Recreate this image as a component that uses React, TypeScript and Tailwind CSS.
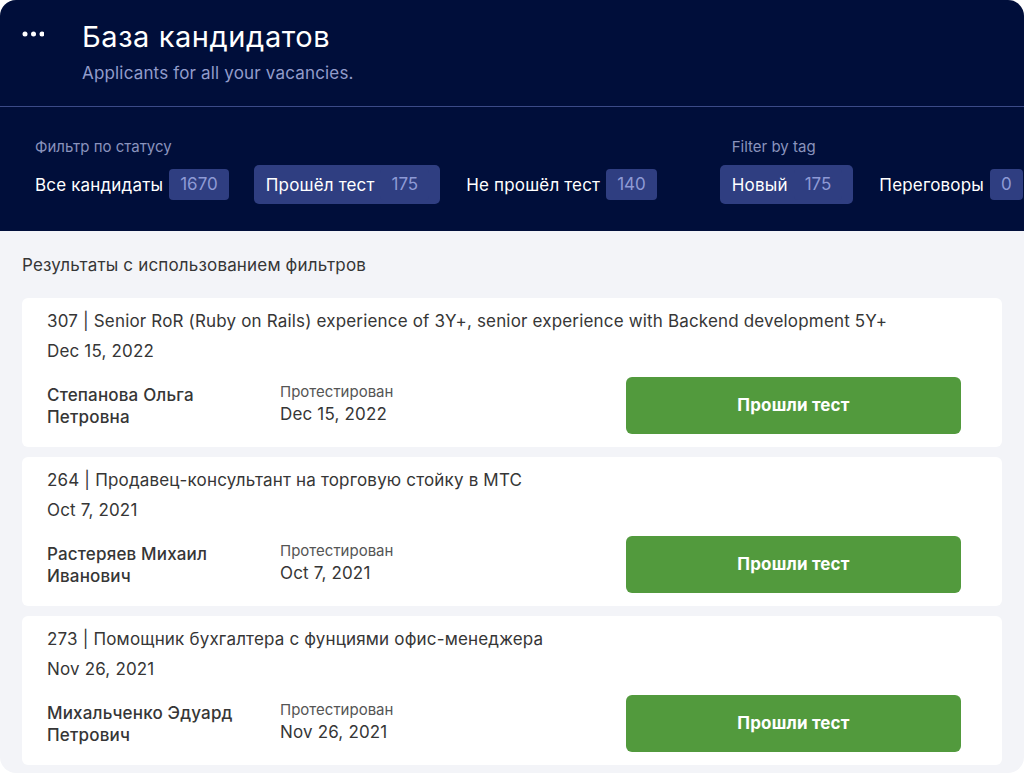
import React from 'react';

interface Chip {
    label: string;
    count: number;
    active?: boolean;
}

interface Candidate {
    id: number;
    vacancy: string;
    date: string;
    name: string;
}

const statusChips: Chip[] = [
    { label: 'Все кандидаты', count: 1670 },
    { label: 'Прошёл тест', count: 175, active: true },
    { label: 'Не прошёл тест', count: 140 },
];

const tagChips: Chip[] = [
    { label: 'Новый', count: 175, active: true },
    { label: 'Переговоры', count: 0 },
];

const candidates: Candidate[] = [
    {
        id: 307,
        vacancy: 'Senior RoR (Ruby on Rails) experience of 3Y+, senior experience with Backend development 5Y+',
        date: 'Dec 15, 2022',
        name: 'Степанова Ольга Петровна',
    },
    {
        id: 264,
        vacancy: 'Продавец-консультант на торговую стойку в МТС',
        date: 'Oct 7, 2021',
        name: 'Растеряев Михаил Иванович',
    },
    {
        id: 273,
        vacancy: 'Помощник бухгалтера с фунциями офис-менеджера',
        date: 'Nov 26, 2021',
        name: 'Михальченко Эдуард Петрович',
    },
];

const FilterChip = ({ chip }: { chip: Chip }) => (
    <div
        className={`flex shrink-0 items-center gap-[6px] whitespace-nowrap rounded-[5px] py-1 pl-3 pr-[11px] ${
            chip.active ? 'bg-[#2f3e81]' : ''
        }`}
    >
        <span className="text-[17px] leading-6 tracking-[0.01em] text-white">{chip.label}</span>
        <span className="rounded-[4px] bg-[#2f3e81] px-[11px] text-[17px] leading-[31px] text-[#8e9ad5]">
            {chip.count}
        </span>
    </div>
);

const FilterGroup = ({ title, chips }: { title: string; chips: Chip[] }) => (
    <div className="flex shrink-0 flex-col gap-2">
        <p className="whitespace-nowrap pl-3 text-[15px] leading-5 text-[#8a93bd]">{title}</p>
        <div className="flex items-center gap-[14px]">
            {chips.map((chip) => (
                <FilterChip key={chip.label} chip={chip} />
            ))}
        </div>
    </div>
);

const CandidateCard = ({ candidate }: { candidate: Candidate }) => (
    <div className="rounded-[6px] bg-white pb-[13px] pl-[25px] pr-[41px] pt-2 text-[17px] tracking-[0.01em] text-[#363636]">
        <p className="leading-[30px]">
            {candidate.id} | {candidate.vacancy}
        </p>
        <p className="leading-[30px]">{candidate.date}</p>
        <div className="mt-[11px] flex items-center">
            <p className="w-[205px] font-medium leading-[22px]">{candidate.name}</p>
            <div className="ml-[28px] flex flex-col pb-[3px]">
                <span className="text-[15px] leading-5 tracking-normal text-[#555]">Протестирован</span>
                <span className="leading-6">{candidate.date}</span>
            </div>
            <button className="ml-auto h-[57px] w-[335px] rounded-[6px] bg-[#529a3d] text-[17px] font-bold tracking-[0.01em] text-white">
                Прошли тест
            </button>
        </div>
    </div>
);

const App = () => {
    return (
        <div className="h-[773px] w-[1024px] bg-white" style={{ fontFamily: 'Inter, "Noto Sans", sans-serif' }}>
            <div className="flex h-full flex-col overflow-hidden rounded-[16px] bg-[#f3f4f8]">
                <header className="bg-[#000e3a]">
                    <div className="flex h-[107px] border-b border-[#3b4a87] pl-[22px] pt-5">
                        <svg width="22" height="10" viewBox="0 0 22 10" className="mt-[9px] fill-white">
                            <circle cx="3" cy="5" r="2.5" />
                            <circle cx="11.5" cy="5" r="2.5" />
                            <circle cx="20" cy="5" r="2.5" />
                        </svg>
                        <div className="ml-[38px]">
                            <h1 className="text-[29px] leading-[34px] tracking-[0.02em] text-white">База кандидатов</h1>
                            <p className="mt-[7px] text-[17px] leading-6 tracking-[0.01em] text-[#929cca]">
                                Applicants for all your vacancies.
                            </p>
                        </div>
                    </div>
                    <div className="flex h-[124px] gap-[52px] overflow-hidden pl-[23px] pt-[30px]">
                        <FilterGroup title="Фильтр по статусу" chips={statusChips} />
                        <FilterGroup title="Filter by tag" chips={tagChips} />
                    </div>
                </header>
                <main className="flex flex-col px-[22px] pt-[22px]">
                    <p className="text-[17px] leading-6 tracking-[0.01em] text-[#363636]">
                        Результаты с использованием фильтров
                    </p>
                    <div className="mt-[21px] flex w-[980px] flex-col gap-[10px]">
                        {candidates.map((candidate) => (
                            <CandidateCard key={candidate.id} candidate={candidate} />
                        ))}
                    </div>
                </main>
            </div>
        </div>
    );
};

export default App;
